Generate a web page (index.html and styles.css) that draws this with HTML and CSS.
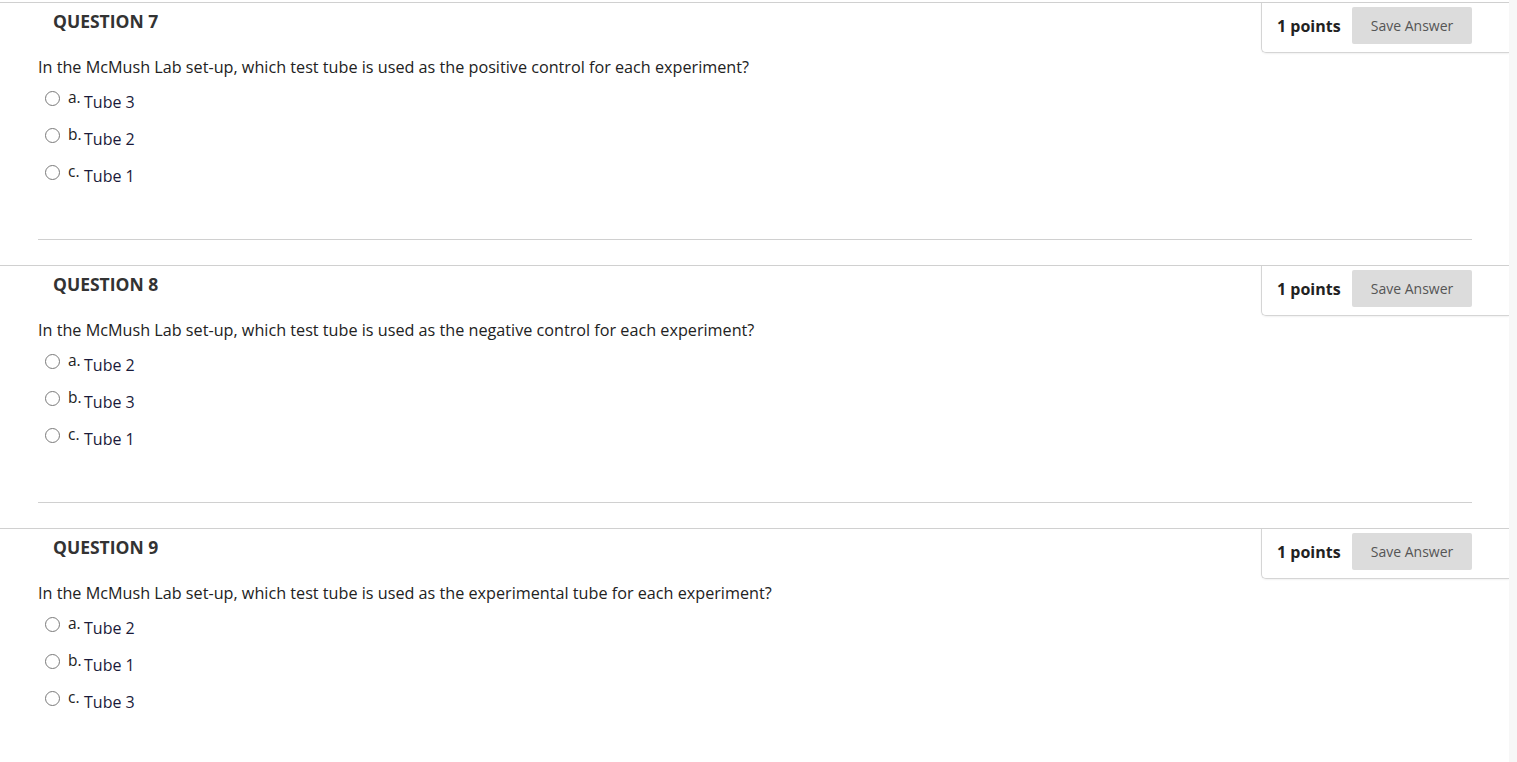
FILE: index.html
```html
<!DOCTYPE html>
<html>
<head>
<meta charset="utf-8">
<link rel="stylesheet" href="styles.css">
</head>
<body>
<div class="page">
  <main class="questions">
    <section class="question">
      <div class="q-head">
        <h3 class="q-title">QUESTION 7</h3>
        <div class="points-box">
          <span class="points">1 points</span>
          <button class="save-btn">Save Answer</button>
        </div>
      </div>
      <p class="q-text">In the McMush Lab set-up, which test tube is used as the positive control for each experiment?</p>
      <ul class="options">
        <li class="option"><span class="radio"></span><span class="letter">a.</span><span class="answer">Tube 3</span></li>
        <li class="option"><span class="radio"></span><span class="letter">b.</span><span class="answer">Tube 2</span></li>
        <li class="option"><span class="radio"></span><span class="letter">c.</span><span class="answer">Tube 1</span></li>
      </ul>
      <hr class="sep">
    </section>
    <section class="question">
      <div class="q-head">
        <h3 class="q-title">QUESTION 8</h3>
        <div class="points-box">
          <span class="points">1 points</span>
          <button class="save-btn">Save Answer</button>
        </div>
      </div>
      <p class="q-text">In the McMush Lab set-up, which test tube is used as the negative control for each experiment?</p>
      <ul class="options">
        <li class="option"><span class="radio"></span><span class="letter">a.</span><span class="answer">Tube 2</span></li>
        <li class="option"><span class="radio"></span><span class="letter">b.</span><span class="answer">Tube 3</span></li>
        <li class="option"><span class="radio"></span><span class="letter">c.</span><span class="answer">Tube 1</span></li>
      </ul>
      <hr class="sep">
    </section>
    <section class="question">
      <div class="q-head">
        <h3 class="q-title">QUESTION 9</h3>
        <div class="points-box">
          <span class="points">1 points</span>
          <button class="save-btn">Save Answer</button>
        </div>
      </div>
      <p class="q-text">In the McMush Lab set-up, which test tube is used as the experimental tube for each experiment?</p>
      <ul class="options">
        <li class="option"><span class="radio"></span><span class="letter">a.</span><span class="answer">Tube 2</span></li>
        <li class="option"><span class="radio"></span><span class="letter">b.</span><span class="answer">Tube 1</span></li>
        <li class="option"><span class="radio"></span><span class="letter">c.</span><span class="answer">Tube 3</span></li>
      </ul>
    </section>
  </main>
  <div class="scroll-strip"></div>
</div>
</body>
</html>
```

FILE: styles.css
```css
html, body {
  margin: 0;
  padding: 0;
  background: #fff;
  height: 100%;
  overflow: hidden;
}
body {
  font-family: "Open Sans", "Liberation Sans", sans-serif;
  color: #222;
}
.page {
  display: flex;
  height: 762px;
}
.questions {
  flex: 1;
  padding-top: 2px;
}
.scroll-strip {
  width: 8px;
  background: #f7f7f7;
}
.question {
  border-top: 1px solid #d0d0d0;
  height: 262px;
}
.q-head {
  display: flex;
  justify-content: space-between;
  align-items: flex-start;
  height: 50px;
}
.q-title {
  margin: 0;
  padding: 5px 0 0 53px;
  font-size: 17.5px;
  line-height: 26px;
  font-weight: 700;
  color: #333;
}
.points-box {
  box-sizing: border-box;
  width: 248px;
  height: 50px;
  display: flex;
  align-items: center;
  padding: 0 37px 4px 15px;
  border-left: 1px solid #d5d5d5;
  border-bottom: 1px solid #d5d5d5;
  border-bottom-left-radius: 5px;
  box-shadow: 0 1px 2px rgba(0,0,0,0.06);
}
.points {
  font-size: 16px;
  font-weight: 700;
  color: #222;
  flex: 1;
}
.save-btn {
  width: 120px;
  height: 37px;
  border: none;
  border-radius: 2px;
  background: #dcdcdc;
  color: #555;
  font-family: "Open Sans", "Liberation Sans", sans-serif;
  font-size: 14px;
  padding: 0;
}
.q-text {
  margin: 3px 0 0 38px;
  font-size: 16.2px;
  line-height: 22px;
}
.options {
  list-style: none;
  margin: 5px 0 0 0;
  padding: 0 0 0 45px;
}
.option {
  height: 37px;
  display: flex;
  align-items: center;
}
.radio {
  box-sizing: border-box;
  width: 15px;
  height: 15px;
  border: 1px solid #7a7a7a;
  border-radius: 50%;
  margin-top: -6px;
}
.letter {
  font-size: 15.5px;
  margin-left: 8px;
  margin-top: -9px;
  width: 16px;
}
.answer {
  font-size: 16px;
  margin-top: 0;
  color: #1a1a3a;
}
.sep {
  margin: 45px 37px 0 38px;
  border: none;
  border-top: 1px solid #d0d0d0;
  height: 0;
}
```
